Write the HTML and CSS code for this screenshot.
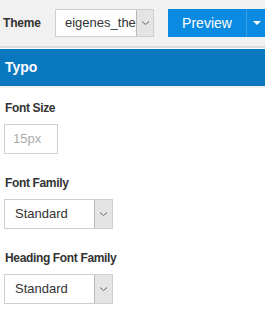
FILE: index.html
```html
<!DOCTYPE html>
<html>
<head>
<meta charset="utf-8">
<link rel="stylesheet" href="styles.css">
</head>
<body>
<div class="topbar">
  <span class="theme-label">Theme</span>
  <div class="select theme-select">
    <span class="select-text">eigenes_theme</span>
    <span class="select-btn"><svg width="9" height="6" viewBox="0 0 9 6"><path d="M1 1.5 L4.5 4.5 L8 1.5" fill="none" stroke="#666" stroke-width="1"/></svg></span>
  </div>
  <div class="split-btn">
    <span class="preview">Preview</span>
    <span class="caret-part"><svg width="8" height="5" viewBox="0 0 8 5"><path d="M0 0 H8 L4 4 Z" fill="#fff"/></svg></span>
  </div>
</div>
<div class="section-head">Typo</div>
<div class="content">
  <div class="field">
    <div class="label">Font Size</div>
    <div class="input">15px</div>
  </div>
  <div class="field">
    <div class="label">Font Family</div>
    <div class="select form-select">
      <span class="select-text">Standard</span>
      <span class="select-btn"><svg width="9" height="6" viewBox="0 0 9 6"><path d="M1 1.5 L4.5 4.5 L8 1.5" fill="none" stroke="#666" stroke-width="1"/></svg></span>
    </div>
  </div>
  <div class="field">
    <div class="label">Heading Font Family</div>
    <div class="select form-select">
      <span class="select-text">Standard</span>
      <span class="select-btn"><svg width="9" height="6" viewBox="0 0 9 6"><path d="M1 1.5 L4.5 4.5 L8 1.5" fill="none" stroke="#666" stroke-width="1"/></svg></span>
    </div>
  </div>
</div>
</body>
</html>
```

FILE: styles.css
```css
html, body {
  margin: 0;
  padding: 0;
  background: #fff;
  font-family: "Liberation Sans", Arial, sans-serif;
  overflow: hidden;
}
.topbar {
  height: 46px;
  background: #f1f1f1;
  border-bottom: 2px solid #dcdcdc;
  display: flex;
  align-items: center;
  padding-left: 3px;
  white-space: nowrap;
}
.topbar > * {
  flex-shrink: 0;
}
.theme-label {
  font-size: 12px;
  font-weight: bold;
  color: #333;
  width: 52px;
  letter-spacing: -0.2px;
}
.select {
  display: flex;
  box-sizing: border-box;
  height: 28px;
  border: 1px solid #cfcfcf;
  background: #fff;
  overflow: hidden;
}
.select-text {
  flex: 1;
  overflow: hidden;
  font-size: 13px;
  color: #333;
  line-height: 26px;
  padding-left: 9px;
  white-space: nowrap;
}
.select-btn {
  width: 16px;
  flex-shrink: 0;
  background: #e4e4e4;
  border-left: 1px solid #b9b9b9;
  display: flex;
  align-items: center;
  justify-content: center;
}
.theme-select {
  width: 99px;
}
.split-btn {
  margin-left: 14px;
  display: flex;
  height: 28px;
  background: #0a8ae0;
}
.preview {
  width: 78px;
  flex-shrink: 0;
  text-align: center;
  color: #fff;
  font-size: 14px;
  line-height: 28px;
}
.caret-part {
  width: 20px;
  flex-shrink: 0;
  border-left: 1px solid #3aa0e6;
  display: flex;
  align-items: center;
  justify-content: center;
}
.section-head {
  margin-top: 1px;
  height: 37px;
  background: #0a78bf;
  color: #fff;
  font-size: 14px;
  font-weight: bold;
  line-height: 37px;
  padding-left: 5px;
  border-bottom: 2px solid #f2f2f2;
}
.content {
  padding: 13px 4px 0 4px;
}
.field {
  margin-bottom: 22px;
}
.label {
  font-size: 12px;
  font-weight: bold;
  color: #333;
  padding-left: 1px;
  line-height: 14px;
  margin-bottom: 9px;
  letter-spacing: -0.35px;
}
.input {
  box-sizing: border-box;
  width: 54px;
  height: 30px;
  border: 1px solid #d0d0d0;
  font-size: 13px;
  color: #aaa;
  line-height: 28px;
  padding-left: 8px;
}
.form-select {
  width: 109px;
  height: 30px;
}
.form-select .select-text {
  line-height: 28px;
  padding-left: 10px;
}
.form-select .select-btn {
  width: 17px;
}
```
